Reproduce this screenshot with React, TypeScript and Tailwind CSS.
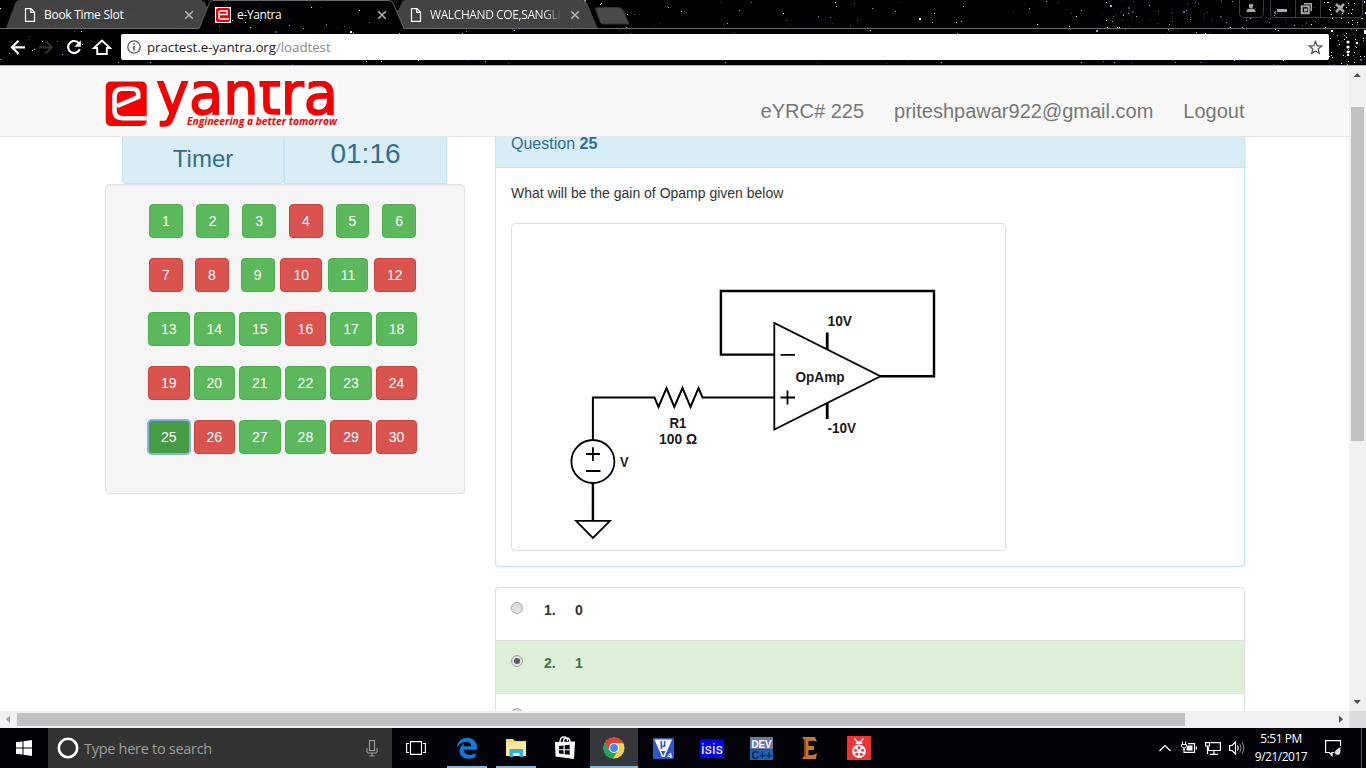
import React from "react";

type Star = { x: number; y: number; s: number; c: string };

function makeStars(): Star[] {
  let seed = 7;
  const rnd = () => {
    seed = (seed * 16807) % 2147483647;
    return seed / 2147483647;
  };
  const shades = ["#ffffff", "#8fa8d8", "#5a6c9c", "#2f3a5c", "#a9b8d8", "#3c4668"];
  const out: Star[] = [];
  const zones: [number, number, number][] = [
    [0, 630, 200],
    [630, 1080, 100],
    [1080, 1320, 180],
    [1320, 1366, 105],
  ];
  zones.forEach(([a, b, n], z) => {
    for (let i = 0; i < n; i++) {
      out.push({
        x: Math.floor(a + rnd() * (b - a)),
        y: Math.floor(rnd() * 65),
        s: rnd() > 0.93 ? 2 : 1,
        c: z === 3 && rnd() > 0.5 ? "#ffffff" : shades[Math.floor(rnd() * 6)],
      });
    }
  });
  return out;
}

const stars = makeStars();

function FrameBackdrop() {
  return (
    <svg className="absolute inset-0" width="1366" height="65" viewBox="0 0 1366 65">
      <rect width="1366" height="65" fill="#000003" />
      <g shapeRendering="crispEdges">
        {stars.map((s, i) => (
          <rect key={i} x={s.x} y={s.y} width={s.s} height={s.s} fill={s.c} />
        ))}
      </g>
      <path d="M6 28L15 4Q16.500 0 20 0H200Q204 0 206 5L207 8L199 28Z" fill="#484848" fillOpacity=".93" />
      <path d="M404 28L397.500 13L401 4Q402.500 0 405 0H582Q586 0 588 5L597.500 28Z" fill="#484848" fillOpacity=".93" />
      <path d="M0 28.500H199L209 4Q210.500 .5 213 .5H389Q392 .5 393.500 4L404 28.500H1366" fill="none" stroke="#666a68" />
      <path d="M597 7.500H619Q622 7.500 623 10L629 24H603Q601 24 600 22L595.500 9Q595 7.500 597 7.500Z" fill="#484848" stroke="#303030" />
      <g fill="none" stroke="#3c3c3c">
        <path d="M1239.500 0V13Q1239.500 17.500 1244 17.500H1259Q1263.500 17.500 1263.500 13V0" />
        <path d="M1270.500 0V13Q1270.500 17.500 1275 17.500H1358Q1362.500 17.500 1362.500 13V0M1295.500 0V17M1320.500 0V17" />
      </g>
      <g fill="#a8a8a8">
        <circle cx="1251" cy="6" r="2.200" />
        <path d="M1246.500 12V11Q1247 8.600 1251 8.600Q1255 8.600 1255.500 11V12Z" />
        <rect x="1277" y="9" width="10" height="3" />
      </g>
      <g fill="none" stroke="#a8a8a8" strokeWidth="1.500">
        <path d="M1304 3.750H1311.250V11" />
        <rect x="1301.750" y="6.250" width="7" height="7" strokeWidth="2" />
        <rect x="1304.500" y="9" width="2" height="2" strokeWidth="1" />
        <path d="M1336 4L1344 12M1344 4L1336 12" strokeWidth="2.500" />
      </g>
    </svg>
  );
}

function PageIcon() {
  return (
    <svg width="12" height="14" viewBox="0 0 12 14" className="shrink-0" fill="none" stroke="#fff" strokeWidth="1.200">
      <path d="M1.500 .7H7L10.500 4.200V13.300H1.500ZM6.800 .7V4.400H10.500" />
    </svg>
  );
}

function CloseIcon() {
  return (
    <svg width="10" height="10" viewBox="0 0 10 10" className="shrink-0" stroke="#b8b8b8" strokeWidth="1.500">
      <path d="M1.200 1.200L8.800 8.800M8.800 1.200L1.200 8.800" />
    </svg>
  );
}

function BrowserFrame() {
  return (
    <header className="relative h-[66px] shrink-0 overflow-hidden border-b border-[#b4b4b6] bg-black">
      <FrameBackdrop />
      <div className="relative flex h-[29px] items-center text-[12px] tracking-[-0.2px] text-white">
        <div className="flex w-[199px] items-center pl-[24px]">
          <PageIcon />
          <span className="ml-[8px] w-[140px] tracking-[-0.28px]">Book Time Slot</span>
          <CloseIcon />
        </div>
        <div className="flex w-[205px] items-center pl-[16px]">
          <svg width="16" height="16" viewBox="0 0 16 16" className="shrink-0">
            <rect width="16" height="16" fill="#fff" />
            <rect x="1" y="1" width="14" height="14" rx="2" fill="#e8000c" />
            <path d="M14 12H6Q4 12 4 10V6Q4 4 6 4H12V7.500H5" fill="none" stroke="#fff" strokeWidth="1.600" />
          </svg>
          <span className="ml-[6px] w-[140px] tracking-[-0.35px]">e-Yantra</span>
          <CloseIcon />
        </div>
        <div className="flex items-center pl-[6px]">
          <PageIcon />
          <span className="ml-[8px] w-[132px] overflow-hidden whitespace-nowrap bg-gradient-to-r from-white from-85% to-transparent bg-clip-text tracking-[-0.4px] text-transparent">
            WALCHAND COE,SANGLI
          </span>
          <span className="ml-[8px] flex"><CloseIcon /></span>
        </div>
      </div>
      <div className="relative flex h-[36px] items-center">
        <svg width="121" height="36" viewBox="0 29 121 36" fill="none" strokeWidth="2.200">
          <path d="M25 47.300H12M18.500 40.800L12 47.300L18.500 53.800" stroke="#fff" />
          <path d="M39 47.300H52M45.500 40.800L52 47.300L45.500 53.800" stroke="#303030" />
          <path d="M79 43.500A6 6 0 1 0 79.800 49" stroke="#fff" />
          <path d="M80.800 40.300V46.800H74.300Z" fill="#fff" />
          <path d="M94 48L102 40.500L110 48H106.800V54H97.200V48Z" stroke="#fff" strokeWidth="1.900" />
        </svg>
        <div className="flex h-[26px] w-[1208px] items-center rounded-[2px] bg-white pl-[6px] pr-[6px]">
          <svg width="14" height="14" viewBox="0 0 14 14" fill="none" stroke="#555" strokeWidth="1.300">
            <circle cx="7" cy="7" r="6.200" />
            <path d="M7 6V10.500M7 3.300V4.800" strokeWidth="1.600" />
          </svg>
          <span className="ml-[6px] flex-1 pt-[2px] text-[13.300px] tracking-[-0.040px] text-[#222]">
            practest.e-yantra.org<span className="text-[#888]">/loadtest</span>
          </span>
          <svg width="15" height="15" viewBox="0 0 15 15" fill="none" stroke="#555" strokeWidth="1.300">
            <path d="M7.500 1.500L9.200 5.700L13.700 6L10.200 8.900L11.300 13.300L7.500 10.900L3.700 13.300L4.800 8.900L1.300 6L5.800 5.700Z" />
          </svg>
        </div>
        <svg width="8" height="16" viewBox="0 0 8 16" className="ml-[15px]" fill="#fff">
          <circle cx="4" cy="3" r="1.600" /><circle cx="4" cy="8" r="1.600" /><circle cx="4" cy="13" r="1.600" />
        </svg>
      </div>
    </header>
  );
}

function Logo() {
  return (
    <svg width="233" height="47" viewBox="105 81 233 47" className="overflow-hidden">
      <rect x="105" y="81" width="233" height="47" fill="#fff" />
      <rect x="105.700" y="81.500" width="41" height="44.500" rx="5" fill="#f40000" />
      <path
        d="M146.700 118.200H123Q114.500 118.200 114.500 110V97Q114.500 88.800 123 88.800H132Q138.200 88.800 138.200 94V97L117 106"
        fill="none" stroke="#fff" strokeWidth="4.600"
      />
      <path d="M118.500 92H130V95.500L118.500 101Z" fill="#f40000" />
      <text x="156" y="114" fontFamily="DejaVu Sans" fontSize="58" fill="#f40000" stroke="#f40000" strokeWidth="1.600" textLength="182" lengthAdjust="spacingAndGlyphs">yantra</text>
      <rect x="186" y="116" width="152" height="12" fill="#fff" />
      <text x="187" y="125.300" fontFamily="Open Sans" fontWeight="700" fontStyle="italic" fontSize="10.500" fill="#f40000" textLength="150" lengthAdjust="spacingAndGlyphs">Engineering a better tomorrow</text>
    </svg>
  );
}

const GREEN = "border-[#4cae4c] bg-[#5cb85c]";
const RED = "border-[#d43f3a] bg-[#d9534f]";
const ACTIVE = "border-[#4a8f6a] bg-[#449d44] outline-2 outline-[#85b0e6] -outline-offset-1";
const NARROW = "w-[33.800px]";
const WIDE = "w-[41.600px]";

const redQuestions = [4, 7, 8, 10, 12, 16, 19, 24, 26, 29, 30];

const rows: { numbers: number[]; cls: string }[] = [
  { numbers: [1, 2, 3, 4, 5, 6], cls: "gap-[12.850px] pl-[43px]" },
  { numbers: [7, 8, 9, 10, 11, 12], cls: "gap-[5.800px] pl-[43px]" },
  { numbers: [13, 14, 15, 16, 17, 18], cls: "gap-[3.950px] pl-[42px]" },
  { numbers: [19, 20, 21, 22, 23, 24], cls: "gap-[3.950px] pl-[42px]" },
  { numbers: [25, 26, 27, 28, 29, 30], cls: "gap-[3.950px] pl-[42px]" },
];

function QuestionButton({ n }: { n: number }) {
  const tone = n === 25 ? ACTIVE : redQuestions.includes(n) ? RED : GREEN;
  const width = n < 10 ? NARROW : n === 11 ? "w-[40.500px]" : WIDE;
  const spacing = n === 7 || n === 8 ? "mr-[6.300px]" : "";
  return (
    <button className={`h-[34px] shrink-0 rounded-[4px] border text-center text-[14px] leading-[20px] text-white ${tone} ${width} ${spacing}`}>
      {n}
    </button>
  );
}

function Sidebar() {
  return (
    <aside className="w-[360px] shrink-0">
      <div className="ml-[17px] flex h-[47px] w-[325px] text-[#31708f]">
        <div className="h-[47px] w-[162px] rounded-b-[4px] border border-t-0 border-[#bce8f1] bg-[#d9edf7] pt-[8px] text-center text-[24px] leading-[28px]">
          Timer
        </div>
        <div className="h-[47px] w-[163px] border border-t-0 border-[#bce8f1] bg-[#d9edf7] text-center text-[28px] leading-[33px]">
          01:16
        </div>
      </div>
      <div className="flex h-[310px] flex-col gap-[20px] rounded-[4px] border border-[#e3e3e3] bg-[#f5f5f5] pt-[19px] shadow-[inset_0_1px_1px_rgba(0,0,0,0.05)]">
        {rows.map((r) => (
          <div key={r.numbers[0]} className={`flex ${r.cls}`}>
            {r.numbers.map((n) => <QuestionButton key={n} n={n} />)}
          </div>
        ))}
      </div>
    </aside>
  );
}

function Circuit() {
  return (
    <svg width="493" height="326" viewBox="512 224 493 326" fill="none" stroke="#000">
      <g strokeWidth="2.400">
        <path d="M774 354.600H720.900V291H934V376.200H880" />
        <path d="M592.900 440V397.500H654.500L658.500 407L666.500 388L674.300 407L682.500 388L690.500 407L698.500 388L702.500 397.500H774" strokeWidth="2" />
        <path d="M592.900 483V521" />
        <path d="M827.200 332.500V349M827.200 403V419" strokeWidth="2.800" />
      </g>
      <g strokeWidth="1.800">
        <path d="M774.300 323V429.500L880.500 376.200Z" />
        <circle cx="592.900" cy="461.500" r="21.500" />
        <path d="M576 520.800H610L592.900 538Z" />
        <path d="M586 454H600M592.900 447.300V461M586 471H600.500M780.500 354.800H795M780.500 397.500H795M787.500 390.500V404.500" />
      </g>
      <g fill="#1a1a1a" stroke="none" fontFamily="Liberation Sans" fontWeight="700" fontSize="14">
        <text x="827.500" y="326" textLength="24.500" lengthAdjust="spacingAndGlyphs">10V</text>
        <text x="827.500" y="433" textLength="28.500" lengthAdjust="spacingAndGlyphs">-10V</text>
        <text x="795.500" y="382" textLength="49" lengthAdjust="spacingAndGlyphs">OpAmp</text>
        <text x="669.500" y="428" textLength="17" lengthAdjust="spacingAndGlyphs">R1</text>
        <text x="659" y="444" textLength="38" lengthAdjust="spacingAndGlyphs">100 Ω</text>
        <text x="620" y="467" textLength="8.500" lengthAdjust="spacingAndGlyphs">V</text>
      </g>
    </svg>
  );
}

function Radio({ checked }: { checked?: boolean }) {
  return (
    <span className="flex h-[12px] w-[12px] items-center justify-center rounded-full border border-[#a5a5a5] bg-gradient-to-b from-[#d8d8d8] to-[#e6e6e6]">
      {checked && <span className="h-[6px] w-[6px] rounded-full bg-[#5c5c5c]" />}
    </span>
  );
}

function Option({ n, text, checked }: { n: string; text: string; checked?: boolean }) {
  return (
    <div className={`flex h-[53px] shrink-0 items-start border-b border-[#ddd] px-[15px] pt-[14px] font-bold ${checked ? "bg-[#dff0d8] text-[#3c763d]" : "text-[#333]"}`}>
      <Radio checked={checked} />
      <span className="ml-[21px] mt-[-2px] w-[31px] leading-[20px]">{n}</span>
      <span className="mt-[-2px] leading-[20px]">{text}</span>
    </div>
  );
}

function MainColumn() {
  return (
    <main className="ml-[30px] w-[750px] shrink-0">
      <section className="h-[430px] rounded-b-[4px] border border-t-0 border-[#bce8f1]">
        <h2 className="h-[31px] border-b border-[#bce8f1] bg-[#d9edf7] pl-[15px] text-[16px] leading-[14px] text-[#31708f]">
          Question <b>25</b>
        </h2>
        <p className="ml-[15px] pt-[15px] leading-[20px] text-[#333]">What will be the gain of Opamp given below</p>
        <div className="ml-[15px] mt-[20px] h-[328px] w-[495px] overflow-hidden rounded-[4px] border border-[#ddd]">
          <Circuit />
        </div>
      </section>
      <div className="mt-[20px] flex h-[140px] flex-col rounded-t-[4px] border border-b-0 border-[#ddd]">
        <Option n="1." text="0" />
        <Option n="2." text="1" checked />
        <div className="flex px-[15px] pt-[14px]"><Radio /></div>
      </div>
    </main>
  );
}

function VerticalScrollbar() {
  return (
    <div className="flex w-[17px] shrink-0 flex-col items-center bg-[#f1f1f1]">
      <svg width="17" height="41" viewBox="0 0 17 41"><path d="M4.500 11H12L8.250 7Z" fill="#505050" /></svg>
      <div className="h-[334px] w-[13px] bg-[#c1c1c1]" />
      <div className="flex-1" />
      <svg width="17" height="17" viewBox="0 0 17 17"><path d="M4.500 6H12L8.250 10Z" fill="#505050" /></svg>
    </div>
  );
}

function HorizontalScrollbar() {
  return (
    <div className="flex h-[17px] shrink-0 items-center bg-[#f1f1f1]">
      <svg width="17" height="17" viewBox="0 0 17 17"><path d="M10 4.500V12L6 8.250Z" fill="#a3a3a3" /></svg>
      <div className="h-[13px] w-[1168px] bg-[#c1c1c1]" />
      <div className="flex-1" />
      <svg width="17" height="17" viewBox="0 0 17 17"><path d="M7 4.500V12L11 8.250Z" fill="#505050" /></svg>
      <div className="h-[17px] w-[17px] bg-[#dcdcdc]" />
    </div>
  );
}

function EdgeIcon() {
  return (
    <svg width="22" height="22" viewBox="0 0 24 24" fill="#0b7bdc">
      <path d="M1 11.500C1.600 5 6 .8 12 .8C18.500 .8 23 5.500 23 11.500V14H8.300C8.600 17.600 11.300 19.400 14.600 19.400C17.300 19.400 19.600 18.600 21.500 17.400V21.800C19.400 23 16.700 23.600 13.700 23.600C7.600 23.600 3.800 20 3.800 15.200C3.800 11.400 6 8.700 9.300 7.200C8.500 8.200 8.200 9.200 8.100 10.200H16.600C16.600 7 15 5.200 11.500 5.200C7.300 5.200 3.500 7.800 1 11.500Z" />
    </svg>
  );
}

function FolderIcon() {
  return (
    <svg width="22" height="20" viewBox="0 0 22 20">
      <path d="M1 1H8L10 3H21V18H1Z" fill="#fbd866" />
      <path d="M1 4.500H21V18H1Z" fill="#ffe9a0" />
      <path d="M4.500 19V11H18V19H14.500V15H8V19Z" fill="#33b0e0" />
    </svg>
  );
}

function StoreIcon() {
  return (
    <svg width="22" height="24" viewBox="0 0 22 24">
      <path d="M6 6Q6 1 10 1Q13.500 1 13.500 5M9.500 6Q9.500 2 12.500 2Q16 2 16 6" fill="none" stroke="#fff" strokeWidth="1.300" />
      <path d="M1 6L21 5.500L20 23L1.500 20.500Z" fill="#fff" />
      <path d="M5 10L9.500 9.500V13.200H5ZM10.700 9.300L15.700 8.800V13.200H10.700ZM5 14.300H9.500V18L5 17.600ZM10.700 14.300H15.700V18.800L10.700 18.200Z" fill="#05060c" />
    </svg>
  );
}

function ChromeIcon() {
  return (
    <svg width="22" height="22" viewBox="0 0 24 24">
      <circle cx="12" cy="12" r="11.500" fill="#f9cf45" />
      <path d="M12 12L7 15L2 6.300A11.500 11.500 0 0 1 22 6.500H12Z" fill="#dc4437" />
      <path d="M2 6.300L7.200 15L12 17.500L15.500 16L11 23.500A11.500 11.500 0 0 1 2 6.300Z" fill="#1fa463" />
      <circle cx="12" cy="12" r="5.500" fill="#fff" />
      <circle cx="12" cy="12" r="4.300" fill="#4688f1" />
    </svg>
  );
}

function KeilIcon() {
  return (
    <svg width="21" height="21" viewBox="0 0 21 21">
      <rect width="21" height="21" rx="1" fill="#2f55cf" />
      <path d="M1.500 1.500H19L11.500 19H9Z" fill="#fff" />
      <text x="6.800" y="9" fontFamily="Liberation Sans" fontWeight="700" fontSize="11" fill="#2f55cf">µ</text>
      <path d="M8 13H12.500L10.200 18Z" fill="#2f55cf" />
      <text x="14.500" y="19.500" fontFamily="Liberation Sans" fontWeight="700" fontSize="8" fill="#fff">4</text>
    </svg>
  );
}

function IsisIcon() {
  return (
    <svg width="24" height="19" viewBox="0 0 24 19">
      <rect width="24" height="19" fill="#0202f2" />
      <text x="1" y="14.500" fontFamily="Roboto" fontSize="15.500" fill="#fff" textLength="22" lengthAdjust="spacingAndGlyphs">isis</text>
    </svg>
  );
}

function DevIcon() {
  return (
    <svg width="23" height="23" viewBox="0 0 23 23">
      <rect width="23" height="12.500" fill="#6d76a8" />
      <rect y="12.500" width="23" height="10.500" fill="#1763b8" />
      <text x="1.500" y="11" fontFamily="Liberation Sans" fontWeight="700" fontSize="10.500" fill="#fff" textLength="20" lengthAdjust="spacingAndGlyphs">DEV</text>
      <text x="1.500" y="21.500" fontFamily="Liberation Sans" fontWeight="700" fontSize="11" fill="#06214a" textLength="20.500" lengthAdjust="spacingAndGlyphs">C++</text>
    </svg>
  );
}

function EclipseIcon() {
  return (
    <svg width="17" height="24" viewBox="0 0 17 24" className="-ml-[2px]">
      <path d="M1 1H14L16 6Q12 4 7.500 5V10H13V14H7.500V19Q12 20 16 17L15 23H1L3 20V4Z" fill="#c87526" />
      <path d="M3 4L5 3V21L3 20Z" fill="#8a4a12" />
    </svg>
  );
}

function BugIcon() {
  return (
    <svg width="24" height="24" viewBox="0 0 24 24">
      <rect width="24" height="24" fill="#f03237" />
      <path d="M7.500 2.500L10.500 6M16.500 2.500L13.500 6" stroke="#fff" strokeWidth="1.300" />
      <path d="M8.500 8Q9 5 12 5Q15 5 15.500 8Z" fill="#fff" />
      <circle cx="12" cy="15.300" r="6.800" fill="#fff" />
      <g fill="#f03237">
        <circle cx="12" cy="11.800" r="1.500" /><circle cx="8.500" cy="14.200" r="1.500" /><circle cx="15.500" cy="14.200" r="1.500" />
        <circle cx="9.700" cy="18.300" r="1.500" /><circle cx="14.300" cy="18.300" r="1.500" />
      </g>
    </svg>
  );
}

function TaskButton({ children, open, active }: { children: React.ReactNode; open?: boolean; active?: boolean }) {
  return (
    <div className={`flex h-[40px] w-[48px] shrink-0 flex-col items-center ${active ? "bg-[#35373b]" : ""}`}>
      <div className="flex h-[38px] items-center pt-[2px]">{children}</div>
      <div className={`h-[2px] ${active ? "w-[48px] bg-[#76b9ed]" : open ? "w-[40px] bg-[#76b9ed]" : "w-[40px]"}`} />
    </div>
  );
}

function Taskbar() {
  return (
    <footer className="flex h-[40px] shrink-0 bg-[#010308]">
      <div className="flex w-[48px] items-center justify-center">
        <svg width="16" height="16" viewBox="0 0 16 16" fill="#fff">
          <path d="M0 2.300L6.500 1.400V7.500H0ZM7.500 1.200L16 0V7.500H7.500ZM0 8.500H6.500V14.600L0 13.700ZM7.500 8.500H16V16L7.500 14.800Z" />
        </svg>
      </div>
      <div className="flex w-[344px] items-center bg-[#333]">
        <svg width="22" height="22" viewBox="0 0 22 22" className="ml-[9px]">
          <circle cx="11" cy="11" r="9.200" fill="none" stroke="#fff" strokeWidth="2.600" />
        </svg>
        <span className="ml-[5px] w-[282px] pt-[2px] text-[14.500px] tracking-[-0.290px] text-[#9b9b9b]">Type here to search</span>
        <svg width="12" height="17" viewBox="0 0 12 17" fill="none" stroke="#a0a0a0" strokeWidth="1.100">
          <rect x="3.500" y=".6" width="5" height="10" />
          <path d="M1 8V11.500Q1 13 2.500 13H9.500Q11 13 11 11.500V8M6 13V16M3.500 16H8.500" />
        </svg>
      </div>
      <div className="flex w-[48px] items-center justify-center">
        <svg width="20" height="14" viewBox="0 0 20 14" fill="none" stroke="#fff" strokeWidth="1.100">
          <path d="M4.500 .6H15.500V13.400H4.500ZM3 2.500H.6V11.500H3M17 2.500H19.400V11.500H17" />
        </svg>
      </div>
      <div className="ml-[3px] flex gap-[1px]">
        <TaskButton open><EdgeIcon /></TaskButton>
        <TaskButton open><FolderIcon /></TaskButton>
        <TaskButton><StoreIcon /></TaskButton>
        <TaskButton active><ChromeIcon /></TaskButton>
        <TaskButton><KeilIcon /></TaskButton>
        <TaskButton><IsisIcon /></TaskButton>
        <TaskButton><DevIcon /></TaskButton>
        <TaskButton><EclipseIcon /></TaskButton>
        <TaskButton><BugIcon /></TaskButton>
      </div>
      <div className="flex-1" />
      <svg width="90" height="40" viewBox="1156 728 90 40" fill="none" stroke="#fff" strokeWidth="1.200">
        <path d="M1159.500 751L1165 745.500L1170.500 751" />
        <path d="M1188 743.600H1194.500V752.400H1184V749M1196.300 746.500V749.500" />
        <path d="M1187.500 745.500H1192.500V750.500H1186.500V748.500Z" fill="#fff" stroke="none" />
        <path d="M1182.500 741.500V744M1185.500 741.500V744M1181.500 744.500H1186.500V746Q1186 748 1184 748Q1182 748 1181.500 746ZM1184 748V750" strokeWidth="1" />
        <path d="M1210.500 742.600H1220.400V750.500H1208.500V747M1214 750.500V754M1210 754.400H1218M1205.600 742.600H1209.500V746H1205.600ZM1207.500 746V754" />
        <path d="M1229.600 745.500H1232L1235.500 742V754L1232 750.500H1229.600Z" />
        <path d="M1237.500 745.500Q1239 748 1237.500 750.500" />
        <path d="M1239.700 743.800Q1242 748 1239.700 752.200M1242 742Q1245.500 748 1242 754" stroke="#777" />
      </svg>
      <div className="w-[70px] text-center text-[12px] leading-[18px] tracking-[-0.5px] text-white">
        <div className="pt-[2px]">5:51 PM</div>
        <div>9/21/2017</div>
      </div>
      <svg width="50" height="40" viewBox="1316 728 50 40" fill="none" stroke="#fff" strokeWidth="1.200">
        <path d="M1340.500 746V740.600H1325.600V752.500H1329.500L1332 755.500V752.500H1334" />
        <path d="M1340.500 747Q1335 750 1334.500 752.500Q1335.500 755.500 1338.500 754.800Q1341 753.500 1340.500 750Z" fill="#ddd" stroke="none" />
        <path d="M1361.500 728V768" stroke="#555" />
      </svg>
    </footer>
  );
}

export default function App() {
  return (
    <div className="flex h-[768px] w-[1366px] flex-col overflow-hidden bg-white font-['Open_Sans',sans-serif]">
      <BrowserFrame />
      <div className="flex h-[645px] shrink-0 font-['Liberation_Sans',sans-serif] text-[14px]">
        <div className="flex w-[1349px] flex-col overflow-hidden">
          <nav className="flex h-[71px] shrink-0 items-start border-b border-[#e7e7e7] bg-[#f8f8f8] pl-[105px] pt-[15px]">
            <Logo />
            <div className="ml-auto mr-[104.500px] mt-[20px] flex gap-[30px] text-[20px] leading-[20px] text-[#777]">
              <span>eYRC# 225</span>
              <span>priteshpawar922@gmail.com</span>
              <span>Logout</span>
            </div>
          </nav>
          <div className="flex min-h-0 flex-1 overflow-hidden pl-[105px]">
            <Sidebar />
            <MainColumn />
          </div>
        </div>
        <VerticalScrollbar />
      </div>
      <HorizontalScrollbar />
      <Taskbar />
    </div>
  );
}
